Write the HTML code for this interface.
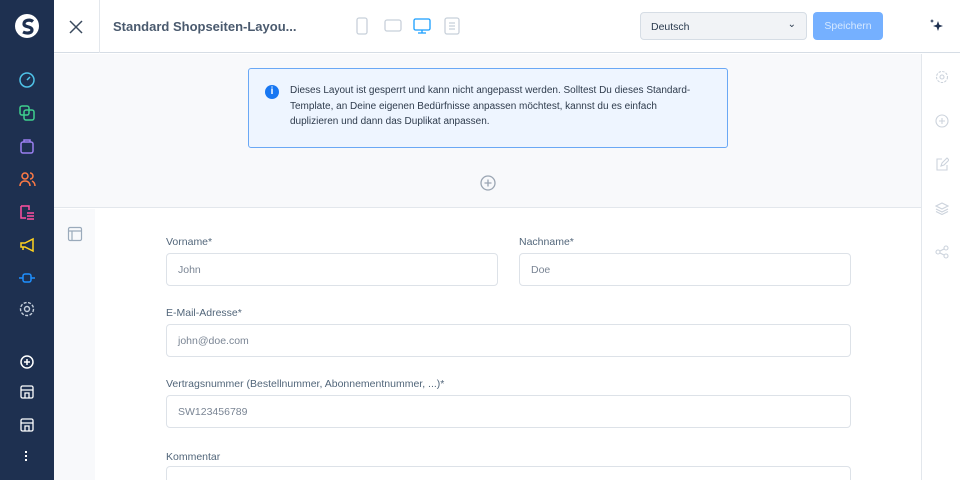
<!DOCTYPE html>
<html style="overflow:hidden;width:960px;height:480px"><head><meta charset="utf-8"><style>
*{box-sizing:border-box;margin:0;padding:0}
body{width:960px;height:480px;overflow:hidden;font-family:"Liberation Sans",sans-serif;background:#fff;position:relative}
.sb{position:absolute;left:0;top:0;width:54px;height:480px;background:#1e3050}
.sb svg{position:absolute;left:18px}
.hd{position:absolute;left:54px;top:0;right:0;height:53px;background:#fff;border-bottom:1px solid #d6dde5}
.abs{position:absolute}
.canvas{position:absolute;left:54px;top:54px;width:867px;height:154px;background:#f8f9fb;border-bottom:1px solid #e3e7ec}
.rail{position:absolute;left:921px;top:54px;width:39px;height:426px;background:#fff;border-left:1px solid #e3e7ec}
.lc{position:absolute;left:54px;top:209px;width:41px;height:271px;background:#f8f9fb}
.lbl{position:absolute;font-size:10.5px;color:#52667a}
.inp{position:absolute;height:33px;border:1px solid #dde2e8;border-radius:4px;font-size:10.5px;color:#7a8594;padding:10px 11px}
</style></head><body>
<div class="sb">
<svg style="left:14px;top:13px" width="26" height="26" viewBox="0 0 26 26"><circle cx="13" cy="13" r="12" fill="#fff"/><path d="M19 8.5c-3-2.5-9-1.5-9 2.5 0 3.5 8 2 8 6 0 3-5 4-9 2" stroke="#1e3050" stroke-width="3.2" fill="none"/></svg>
<svg style="top:71px" width="18" height="18" viewBox="0 0 18 18" fill="none" stroke="#4fc3e8" stroke-width="1.5"><circle cx="9" cy="9" r="7"/><path d="M9 9l3-3"/></svg>
<svg style="top:104px" width="18" height="18" viewBox="0 0 18 18" fill="none" stroke="#3fcf8e" stroke-width="1.5"><rect x="2" y="2" width="9" height="9" rx="2"/><rect x="6" y="6" width="10" height="10" rx="2"/></svg>
<svg style="top:137px" width="18" height="18" viewBox="0 0 18 18" fill="none" stroke="#9a7ff0" stroke-width="1.5"><rect x="3" y="5" width="12" height="11" rx="2"/><path d="M6 5V3h6v2"/></svg>
<svg style="top:170px" width="18" height="18" viewBox="0 0 18 18" fill="none" stroke="#ff7a45" stroke-width="1.5"><circle cx="7" cy="6" r="3"/><path d="M2 16c0-3 2-5 5-5s5 2 5 5M12 3a3 3 0 010 6M14 11c2 1 3 3 3 5"/></svg>
<svg style="top:203px" width="18" height="18" viewBox="0 0 18 18" fill="none" stroke="#ff4fa0" stroke-width="1.5"><path d="M3 3h8v4M3 3v12h5M9 10h7M9 13h7M9 16h7"/></svg>
<svg style="top:236px" width="18" height="18" viewBox="0 0 18 18" fill="none" stroke="#ffd21f" stroke-width="1.5"><path d="M3 7h4l8-4v12l-8-4H3zM5 11v3"/></svg>
<svg style="top:269px" width="18" height="18" viewBox="0 0 18 18" fill="none" stroke="#1e90ff" stroke-width="1.5"><rect x="5" y="5" width="8" height="8" rx="2"/><path d="M1 9h4M13 9h4"/></svg>
<svg style="top:300px" width="18" height="18" viewBox="0 0 18 18" fill="none" stroke="#c5cfdc" stroke-width="1.4"><circle cx="9" cy="9" r="2.5"/><circle cx="9" cy="9" r="6.5" stroke-dasharray="3 1.5"/></svg>
<svg style="top:353px" width="18" height="18" viewBox="0 0 18 18" fill="none" stroke="#fff" stroke-width="1.5"><circle cx="9" cy="9" r="6"/><path d="M9 6v6M6 9h6"/></svg>
<svg style="top:383px" width="18" height="18" viewBox="0 0 18 18" fill="none" stroke="#fff" stroke-width="1.3"><rect x="3" y="3" width="12" height="12" rx="1.5"/><path d="M3 7h12M7 15v-5h4v5"/></svg>
<svg style="top:416px" width="18" height="18" viewBox="0 0 18 18" fill="none" stroke="#fff" stroke-width="1.3"><rect x="3" y="3" width="12" height="12" rx="1.5"/><path d="M3 7h12M7 15v-5h4v5"/></svg>
<div class="abs" style="left:25px;top:451px;width:2px;height:10px;border-left:2px dotted #fff"></div>
</div>
<div class="hd">
<div class="abs" style="left:45px;top:0;width:1px;height:53px;background:#e3e7ec"></div>
<svg class="abs" style="left:14px;top:19px" width="16" height="16" viewBox="0 0 16 16" stroke="#3a4a5e" stroke-width="1.5"><path d="M2 2l12 12M14 2L2 14"/></svg>
<div class="abs" style="left:59px;top:19px;font-size:13px;font-weight:bold;color:#4a5a6e">Standard Shopseiten-Layou...</div>
<svg class="abs" style="left:300px;top:16px" width="120" height="20" viewBox="0 0 120 20" fill="none" stroke-width="1.3"><rect x="3" y="2" width="10" height="16" rx="2" stroke="#c8d0da"/><rect x="31" y="4" width="16" height="11" rx="2" stroke="#c8d0da"/><rect x="60" y="3" width="16" height="11" rx="1.5" stroke="#189eff"/><path d="M64 17h8M68 14v3" stroke="#189eff"/><rect x="91" y="2" width="14" height="16" rx="2" stroke="#c8d0da"/><path d="M95 7h6M95 10h6M95 13h6" stroke="#c8d0da"/></svg>
<div class="abs" style="left:586px;top:12px;width:167px;height:28px;background:#f1f3f6;border:1px solid #d6dde5;border-radius:4px;font-size:10.5px;color:#2a3a4e;padding:8px 10px">Deutsch<span style="position:absolute;right:10px;top:6px;font-size:10px">&#8964;</span></div>
<div class="abs" style="left:759px;top:12px;width:70px;height:28px;background:#75b0ff;border-radius:4px;font-size:10.5px;color:#d6e8ff;text-align:center;line-height:28px">Speichern</div>
<svg class="abs" style="left:875px;top:18px" width="16" height="16" viewBox="0 0 16 16" fill="#1e3050"><path d="M9 3l1.3 3.7L14 8l-3.7 1.3L9 13l-1.3-3.7L4 8l3.7-1.3z"/><path d="M3 1l.6 1.4L5 3l-1.4.6L3 5l-.6-1.4L1 3l1.4-.6z"/></svg>
</div>
<div class="canvas">
<div class="abs" style="left:194px;top:14px;width:480px;height:80px;background:#eef5ff;border:1px solid #6aa8f5;border-radius:3px">
<div class="abs" style="left:16px;top:16px;width:14px;height:14px;border-radius:50%;background:#1877f2;color:#fff;font-size:10px;font-weight:bold;text-align:center;line-height:14px">i</div>
<div class="abs" style="left:41px;top:14px;font-size:10px;line-height:15.5px;color:#2e3b4c;width:418px">Dieses Layout ist gesperrt und kann nicht angepasst werden. Solltest Du dieses Standard-Template, an Deine eigenen Bedürfnisse anpassen möchtest, kannst du es einfach duplizieren und dann das Duplikat anpassen.</div>
</div>
<svg class="abs" style="left:425px;top:120px" width="18" height="18" viewBox="0 0 18 18" fill="none" stroke="#9aa5b2" stroke-width="1.3"><circle cx="9" cy="9" r="7"/><path d="M9 5.5v7M5.5 9h7"/></svg>
</div>
<div class="lc"><svg class="abs" style="left:13px;top:17px" width="16" height="16" viewBox="0 0 16 16" fill="none" stroke="#9aaabb" stroke-width="1.2"><rect x="1.5" y="1.5" width="13" height="13" rx="1.5"/><path d="M1.5 5h13M5 5v9.5"/></svg></div>
<div class="rail">
<svg class="abs" style="left:13px;top:16px" width="14" height="14" viewBox="0 0 14 14" fill="none" stroke="#ccd3dc" stroke-width="1.1"><circle cx="7" cy="7" r="2"/><circle cx="7" cy="7" r="5.5" stroke-dasharray="2.5 1.2"/></svg>
<svg class="abs" style="left:13px;top:60px" width="14" height="14" viewBox="0 0 14 14" fill="none" stroke="#ccd3dc" stroke-width="1.1"><circle cx="7" cy="7" r="6"/><path d="M7 4v6M4 7h6"/></svg>
<svg class="abs" style="left:13px;top:103px" width="14" height="14" viewBox="0 0 14 14" fill="none" stroke="#ccd3dc" stroke-width="1.1"><path d="M7 2H2v11h10V8M6 9l1-3 5-5 2 2-5 5z"/></svg>
<svg class="abs" style="left:13px;top:147px" width="14" height="14" viewBox="0 0 14 14" fill="none" stroke="#ccd3dc" stroke-width="1.1"><path d="M7 2l6 3-6 3-6-3zM1 8l6 3 6-3M1 10.5l6 3 6-3"/></svg>
<svg class="abs" style="left:13px;top:191px" width="14" height="14" viewBox="0 0 14 14" fill="none" stroke="#ccd3dc" stroke-width="1.1"><circle cx="3" cy="7" r="2"/><circle cx="11" cy="3" r="2"/><circle cx="11" cy="11" r="2"/><path d="M5 6l4-2M5 8l4 2"/></svg>
</div>
<div class="lbl" style="left:166px;top:236px">Vorname*</div>
<div class="inp" style="left:166px;top:253px;width:332px">John</div>
<div class="lbl" style="left:519px;top:236px">Nachname*</div>
<div class="inp" style="left:519px;top:253px;width:332px">Doe</div>
<div class="lbl" style="left:166px;top:307px">E-Mail-Adresse*</div>
<div class="inp" style="left:166px;top:324px;width:685px">john@doe.com</div>
<div class="lbl" style="left:166px;top:378px">Vertragsnummer (Bestellnummer, Abonnementnummer, ...)*</div>
<div class="inp" style="left:166px;top:395px;width:685px">SW123456789</div>
<div class="lbl" style="left:166px;top:451px">Kommentar</div>
<div class="inp" style="left:166px;top:466px;width:685px;height:14px;border-bottom:none;border-radius:4px 4px 0 0"></div>
</body></html>
